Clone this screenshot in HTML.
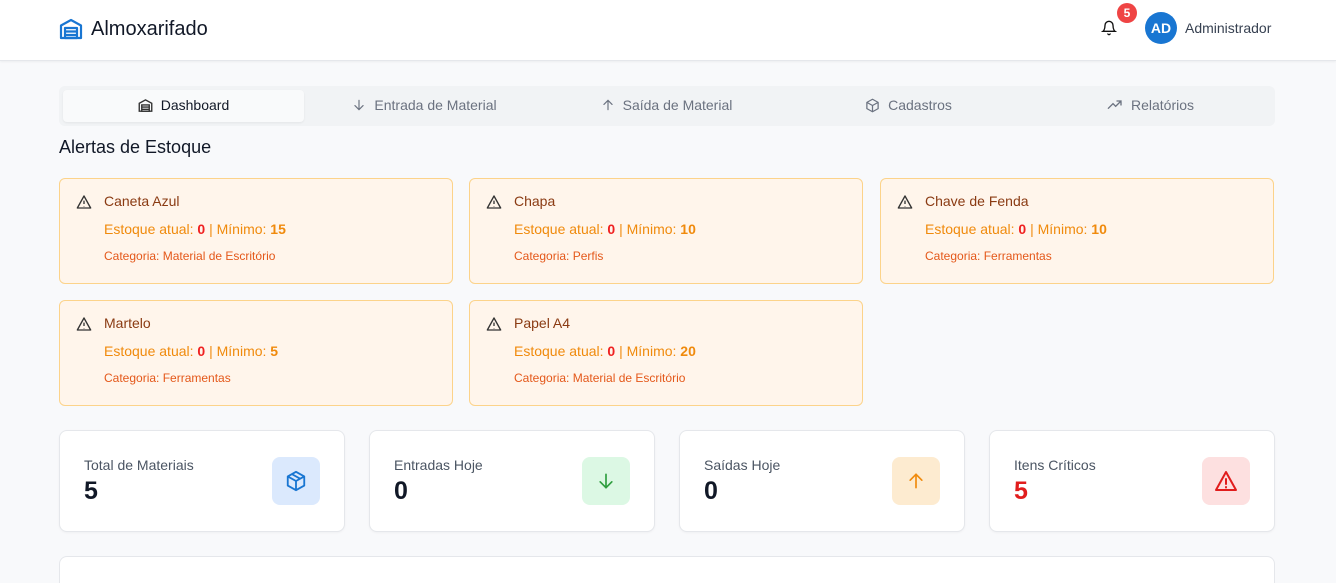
<!DOCTYPE html>
<html style="height:583px;overflow:hidden"><head><meta charset="utf-8"><style>
*{box-sizing:border-box;margin:0;padding:0}
body{width:1336px;height:583px;overflow:hidden;background:#f8f9fb;font-family:"Liberation Sans",sans-serif;color:#111827;position:relative}
.hdr{position:absolute;left:0;top:0;width:1336px;height:61px;background:#fff;border-bottom:1px solid #e5e7eb;box-shadow:0 1px 2px rgba(0,0,0,.05)}
.logo{position:absolute;left:59px;top:17px;display:flex;align-items:center;gap:8px;font-size:20px;font-weight:500;color:#111827}
.bell{position:absolute;left:1101px;top:20px}
.badge{position:absolute;left:1117px;top:3px;width:20px;height:20px;border-radius:50%;background:#ef4444;color:#fff;font-size:12px;font-weight:bold;text-align:center;line-height:20px}
.av{position:absolute;left:1145px;top:12px;width:32px;height:32px;border-radius:50%;background:#1976d2;color:#fff;font-size:14px;font-weight:bold;text-align:center;line-height:32px}
.adm{position:absolute;left:1185px;top:20px;font-size:14px;color:#374151;font-weight:500}
.tabs{position:absolute;left:59px;top:86px;width:1216px;height:40px;background:#f1f3f5;border-radius:6px}
.tab{position:absolute;top:4px;height:32px;width:241px;display:flex;align-items:center;justify-content:center;gap:8px;font-size:14px;color:#6b7280;font-weight:500;padding-bottom:2px}
.tab.act{background:#f9fafb;border-radius:4px;color:#111827;box-shadow:0 1px 2px rgba(0,0,0,.06)}
h2{position:absolute;left:59px;top:137px;font-size:18px;font-weight:500;color:#111827}
.al{position:absolute;width:394px;height:106px;background:#fff5eb;border:1px solid #fcd38a;border-radius:6px}
.al svg{position:absolute;left:16px;top:15px}
.al .t{position:absolute;left:44px;top:14px;font-size:14px;font-weight:500;color:#8a3a12}
.al .s{position:absolute;left:44px;top:42px;font-size:14px;color:#f08a0c}
.al .s b{font-weight:bold}.al .s .r{color:#ef2020}
.al .c{position:absolute;left:44px;top:70px;font-size:12px;color:#e4581a}
.st{position:absolute;top:430px;width:286px;height:102px;background:#fff;border:1px solid #e5e7eb;border-radius:8px;box-shadow:0 1px 2px rgba(0,0,0,.04)}
.st .l{position:absolute;left:24px;top:26px;font-size:14px;color:#4b5563}
.st .v{position:absolute;left:24px;top:46px;font-size:25px;font-weight:bold;color:#111827}
.st .i{position:absolute;left:212px;top:26px;width:48px;height:48px;border-radius:8px;display:flex;align-items:center;justify-content:center}
.bot{position:absolute;left:59px;top:556px;width:1216px;height:27px;background:#fff;border:1px solid #e5e7eb;border-bottom:none;border-radius:8px 8px 0 0}
</style></head><body>
<div class="hdr">
<div class="logo"><svg width="24" height="24" viewBox="0 0 24 24" fill="none" stroke="#1976d2" stroke-width="2.2" stroke-linejoin="round"><path d="M2 8.5V21h20V8.5L12 3z"/><path d="M6 11h12v10H6zM6 14.5h12M6 18h12"/></svg>Almoxarifado</div>
<svg class="bell" width="16" height="16" viewBox="0 0 24 24" fill="none" stroke="#111" stroke-width="2" stroke-linecap="round"><path d="M6 8a6 6 0 0 1 12 0c0 7 3 9 3 9H3s3-2 3-9M10.3 21a1.9 1.9 0 0 0 3.4 0"/></svg>
<div class="badge">5</div>
<div class="av">AD</div>
<div class="adm">Administrador</div>
</div>
<div class="tabs">
<div class="tab act" style="left:4px"><svg width="15" height="15" viewBox="0 0 24 24" fill="none" stroke="#333" stroke-width="2.2"><path d="M2 8.5V21h20V8.5L12 3z"/><path d="M6 11h12v10H6zM6 14.5h12M6 18h12"/></svg>Dashboard</div>
<div class="tab" style="left:245px"><svg width="14" height="14" viewBox="0 0 24 24" fill="none" stroke="#6b7280" stroke-width="2" stroke-linecap="round"><path d="M12 4v16M5 13l7 7 7-7"/></svg>Entrada de Material</div>
<div class="tab" style="left:487px"><svg width="14" height="14" viewBox="0 0 24 24" fill="none" stroke="#6b7280" stroke-width="2" stroke-linecap="round"><path d="M12 20V4M5 11l7-7 7 7"/></svg>Saída de Material</div>
<div class="tab" style="left:729px"><svg width="15" height="15" viewBox="0 0 24 24" fill="none" stroke="#6b7280" stroke-width="2" stroke-linejoin="round"><path d="M12 2l9 5v10l-9 5-9-5V7zM3 7l9 5 9-5M12 12v10"/></svg>Cadastros</div>
<div class="tab" style="left:971px"><svg width="16" height="16" viewBox="0 0 24 24" fill="none" stroke="#6b7280" stroke-width="2" stroke-linecap="round"><path d="M2 17l7-7 4 4 8-8M15 6h6v6"/></svg>Relatórios</div>
</div>
<h2>Alertas de Estoque</h2>
<div class="al" style="left:59px;top:178px"><svg width="16" height="16" viewBox="0 0 24 24" fill="none" stroke="#333" stroke-width="2" stroke-linejoin="round"><path d="M12 3L2 21h20zM12 10v5M12 18v.5"/></svg><div class="t">Caneta Azul</div><div class="s">Estoque atual: <b class="r">0</b> | Mínimo: <b>15</b></div><div class="c">Categoria: Material de Escritório</div></div>
<div class="al" style="left:469px;top:178px"><svg width="16" height="16" viewBox="0 0 24 24" fill="none" stroke="#333" stroke-width="2" stroke-linejoin="round"><path d="M12 3L2 21h20zM12 10v5M12 18v.5"/></svg><div class="t">Chapa</div><div class="s">Estoque atual: <b class="r">0</b> | Mínimo: <b>10</b></div><div class="c">Categoria: Perfis</div></div>
<div class="al" style="left:880px;top:178px"><svg width="16" height="16" viewBox="0 0 24 24" fill="none" stroke="#333" stroke-width="2" stroke-linejoin="round"><path d="M12 3L2 21h20zM12 10v5M12 18v.5"/></svg><div class="t">Chave de Fenda</div><div class="s">Estoque atual: <b class="r">0</b> | Mínimo: <b>10</b></div><div class="c">Categoria: Ferramentas</div></div>
<div class="al" style="left:59px;top:300px"><svg width="16" height="16" viewBox="0 0 24 24" fill="none" stroke="#333" stroke-width="2" stroke-linejoin="round"><path d="M12 3L2 21h20zM12 10v5M12 18v.5"/></svg><div class="t">Martelo</div><div class="s">Estoque atual: <b class="r">0</b> | Mínimo: <b>5</b></div><div class="c">Categoria: Ferramentas</div></div>
<div class="al" style="left:469px;top:300px"><svg width="16" height="16" viewBox="0 0 24 24" fill="none" stroke="#333" stroke-width="2" stroke-linejoin="round"><path d="M12 3L2 21h20zM12 10v5M12 18v.5"/></svg><div class="t">Papel A4</div><div class="s">Estoque atual: <b class="r">0</b> | Mínimo: <b>20</b></div><div class="c">Categoria: Material de Escritório</div></div>
<div class="st" style="left:59px"><div class="l">Total de Materiais</div><div class="v">5</div><div class="i" style="background:#dbe9fd"><svg width="22" height="22" viewBox="0 0 24 24" fill="none" stroke="#1976d2" stroke-width="2" stroke-linejoin="round"><path d="M12 2l9 5v10l-9 5-9-5V7zM3 7l9 5 9-5M12 12v10M7.5 4.5l9 5"/></svg></div></div>
<div class="st" style="left:369px"><div class="l">Entradas Hoje</div><div class="v">0</div><div class="i" style="background:#dcf8e4"><svg width="20" height="20" viewBox="0 0 24 24" fill="none" stroke="#2e9e3e" stroke-width="2" stroke-linecap="round"><path d="M12 4v16M5 13l7 7 7-7"/></svg></div></div>
<div class="st" style="left:679px"><div class="l">Saídas Hoje</div><div class="v">0</div><div class="i" style="background:#fdebd0"><svg width="20" height="20" viewBox="0 0 24 24" fill="none" stroke="#f08a0c" stroke-width="2" stroke-linecap="round"><path d="M12 20V4M5 11l7-7 7 7"/></svg></div></div>
<div class="st" style="left:989px"><div class="l">Itens Críticos</div><div class="v" style="color:#e11d1d">5</div><div class="i" style="background:#fde0e0"><svg width="24" height="24" viewBox="0 0 24 24" fill="none" stroke="#e11d1d" stroke-width="2" stroke-linejoin="round" stroke-linecap="round"><path d="M12 3L2 21h20zM12 10v5M12 18v.5"/></svg></div></div>
<div class="bot"></div>
</body></html>
